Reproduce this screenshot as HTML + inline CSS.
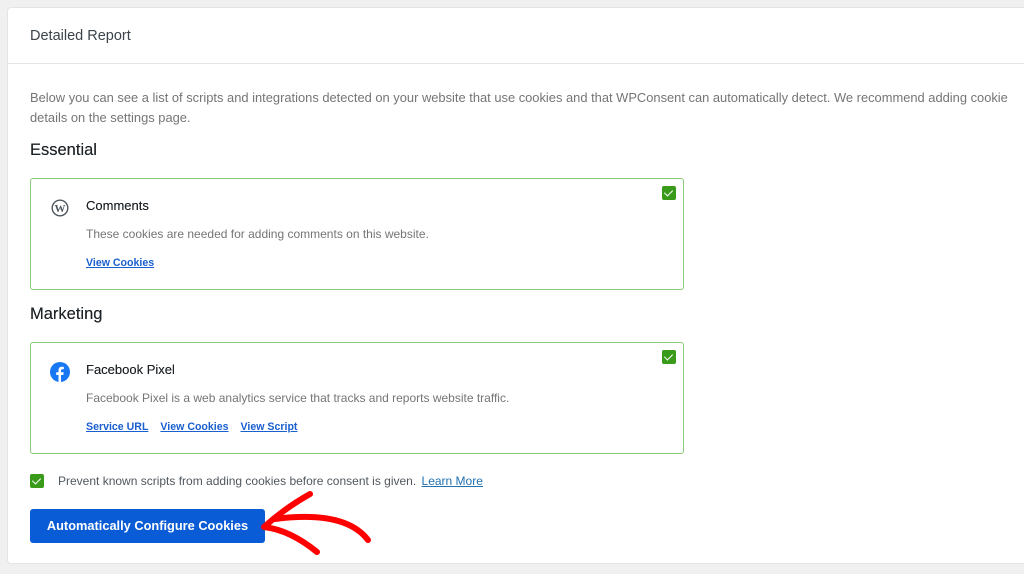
<!DOCTYPE html>
<html><head><meta charset="utf-8"><style>
*{box-sizing:border-box;margin:0;padding:0}
body{width:1024px;height:574px;background:#f0f0f1;font-family:"Liberation Sans",sans-serif;position:relative;overflow:hidden;color:#3c434a}
.card{position:absolute;left:7px;top:7px;width:1030px;height:557px;background:#fff;border:1px solid #e2e4e7;border-radius:4px}
.hd{height:56px;border-bottom:1px solid #e5e5e5;padding:20px 0 0 22px;font-size:14.5px;color:#3c434a}
.p{position:absolute;left:22px;top:80px;font-size:12.9px;line-height:20px;color:#757575;white-space:nowrap}
h3{position:absolute;left:22px;font-size:16.5px;font-weight:normal;color:#1d2327;text-shadow:0 0 0.3px #1d2327}
.box{position:absolute;left:22px;width:654px;height:112px;border:1px solid #8cc97a;border-radius:3px}
.cb{position:absolute;width:14px;height:14px;background:#3a9a1a;border-radius:2px}
.cb:after{content:"";position:absolute;left:4px;top:2px;width:4px;height:7px;border:solid #fff;border-width:0 1.5px 1.5px 0;transform:rotate(45deg)}
.t{position:absolute;left:55px;top:19px;font-size:13px;color:#1d2327;text-shadow:0 0 0.3px #1d2327}
.d{position:absolute;left:55px;top:48px;font-size:12px;color:#757575;white-space:nowrap}
.l{position:absolute;left:55px;top:78px;font-size:10.6px;font-weight:bold;color:#1a5fcf;text-decoration:underline;white-space:nowrap}
.l span{margin-right:12px}
.ic{position:absolute;left:20px;top:20px}
.btn{position:absolute;left:22px;top:501px;width:235px;height:34px;background:#0a5cd6;border-radius:3px;color:#fff;font-size:12.8px;font-weight:bold;text-align:center;line-height:34px}
</style></head><body>
<div class="card">
<div class="hd">Detailed Report</div>
<div class="p">Below you can see a list of scripts and integrations detected on your website that use cookies and that WPConsent can automatically detect. We recommend adding cookie<br>details on the settings page.</div>
<h3 style="top:133px">Essential</h3>
<div class="box" style="top:170px">
<div class="cb" style="left:631px;top:7px"></div>
<svg class="ic" width="18" height="18" viewBox="0 0 18 18"><circle cx="9" cy="9" r="7.8" fill="none" stroke="#50575e" stroke-width="1.4"/><text x="9" y="13" font-size="11" font-family="Liberation Serif" font-weight="bold" text-anchor="middle" fill="#50575e">W</text></svg>
<div class="t">Comments</div>
<div class="d">These cookies are needed for adding comments on this website.</div>
<div class="l"><span>View Cookies</span></div>
</div>
<h3 style="top:297px">Marketing</h3>
<div class="box" style="top:334px">
<div class="cb" style="left:631px;top:7px"></div>
<svg class="ic" width="20" height="20" viewBox="0 0 20 20" style="left:19px;top:19px"><circle cx="10" cy="10" r="10" fill="#1877f2"/><path d="M11 20v-7h2.3l.4-2.7H11V8.6c0-.8.3-1.3 1.4-1.3h1.4V4.9c-.3 0-1.1-.1-2-.1-2 0-3.3 1.2-3.3 3.4v2.1H6.2V13h2.3v7z" fill="#fff"/></svg>
<div class="t">Facebook Pixel</div>
<div class="d">Facebook Pixel is a web analytics service that tracks and reports website traffic.</div>
<div class="l"><span>Service URL</span><span>View Cookies</span><span>View Script</span></div>
</div>
<div class="cb" style="left:22px;top:466px"></div>
<div style="position:absolute;left:50px;top:466px;font-size:12px;color:#50575e;white-space:nowrap">Prevent known scripts from adding cookies before consent is given. <span style="color:#2271b1;text-decoration:underline;margin-left:2px">Learn More</span></div>
<div class="btn">Automatically Configure Cookies</div>
</div>
<svg style="position:absolute;left:0;top:0" width="1024" height="574"><g fill="none" stroke="#f00" stroke-width="6" stroke-linecap="round" stroke-linejoin="round"><path d="M310 494 Q285 508 264 527 Q290 530 317 552"/><path d="M275 519 Q345 510 368 540"/></g></svg>
</body></html>
